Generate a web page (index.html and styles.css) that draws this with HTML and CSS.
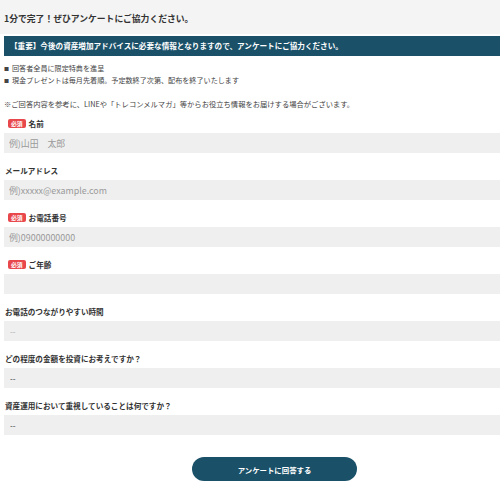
FILE: index.html
```html
<!DOCTYPE html>
<html lang="ja">
<head>
    <meta charset="UTF-8">
    <meta name="viewport" content="width=device-width, initial-scale=1.0">
    <title>アンケート</title>
    <link rel="stylesheet" href="styles.css">
</head>
<body>
    <header class="page-head">
        <h1>1分で完了！ぜひアンケートにご協力ください。</h1>
    </header>

    <div class="page">
        <p class="notice">【重要】今後の資産増加アドバイスに必要な情報となりますので、アンケートにご協力ください。</p>

        <ul class="perks">
            <li>回答者全員に限定特典を進呈</li>
            <li>現金プレゼントは毎月先着順。予定数終了次第、配布を終了いたします</li>
        </ul>

        <p class="note"><span class="mark">※&#xFE0E;</span>ご回答内容を参考に、LINEや「トレコンメルマガ」等からお役立ち情報をお届けする場合がございます。</p>

        <form class="survey" id="surveyForm">
            <div class="field">
                <label for="name"><span class="req">必須</span>名前</label>
                <input type="text" id="name" placeholder="例)山田　太郎">
            </div>

            <div class="field">
                <label for="email">メールアドレス</label>
                <input type="email" id="email" placeholder="例)xxxxx@example.com">
            </div>

            <div class="field">
                <label for="tel"><span class="req">必須</span>お電話番号</label>
                <input type="tel" id="tel" placeholder="例)09000000000">
            </div>

            <div class="field">
                <label for="age"><span class="req">必須</span>ご年齢</label>
                <input type="text" id="age">
            </div>

            <div class="field">
                <label for="callTime">お電話のつながりやすい時間</label>
                <select id="callTime" class="muted">
                    <option>--</option>
                </select>
            </div>

            <div class="field">
                <label for="budget">どの程度の金額を投資にお考えですか？</label>
                <select id="budget">
                    <option>--</option>
                </select>
            </div>

            <div class="field">
                <label for="priority">資産運用において重視していることは何ですか？</label>
                <select id="priority">
                    <option>--</option>
                </select>
            </div>

            <button type="submit" class="submit-btn">アンケートに回答する</button>
        </form>
    </div>
</body>
</html>
```

FILE: styles.css
```css
* {
    margin: 0;
    padding: 0;
    box-sizing: border-box;
}

body {
    font-family: 'Noto Sans CJK JP', 'Noto Sans', sans-serif;
    color: #333;
    background: #fff;
}

.page-head {
    background: #f4f4f4;
    height: 34px;
    display: flex;
    align-items: center;
    padding: 2px 0 0 4px;
}

.page-head h1 {
    font-size: 8.8px;
    font-weight: 700;
    color: #333;
}

.page {
    padding-left: 4px;
}

.notice {
    margin-top: 2px;
    height: 20px;
    line-height: 20px;
    background: #1a5169;
    color: #fff;
    font-size: 7.6px;
    font-weight: 700;
    padding-left: 6px;
    white-space: nowrap;
    overflow: hidden;
}

.perks {
    list-style: none;
    margin-top: 6px;
}

.perks li {
    font-size: 7.1px;
    line-height: 11px;
    color: #444;
    white-space: nowrap;
}

.perks li::before {
    content: "■";
    font-size: 5px;
    margin-right: 3px;
    vertical-align: 1px;
}

.note {
    margin-top: 12px;
    font-size: 7.3px;
    line-height: 12px;
    color: #444;
    white-space: nowrap;
}

.note .mark {
    font-family: 'Noto Sans CJK JP', sans-serif;
    font-variant-emoji: text;
    color: #444;
}

.survey {
    margin-top: 7px;
    display: flex;
    flex-direction: column;
}

.field {
    margin-bottom: 11px;
}

.field label {
    display: flex;
    align-items: center;
    height: 12px;
    margin-bottom: 4px;
    font-size: 7.6px;
    font-weight: 700;
    color: #333;
    padding-left: 1px;
}

.req {
    display: inline-block;
    background: #e8474b;
    color: #fff;
    font-size: 5.8px;
    font-weight: 700;
    line-height: 9px;
    height: 9px;
    padding: 0 3px;
    border-radius: 2px;
    margin: 0 3px;
}

.field input,
.field select {
    display: block;
    width: 100%;
    height: 20px;
    border: none;
    background: #efefef;
    padding: 0 5px;
    font-family: inherit;
    font-size: 8.9px;
    color: #333;
    outline: none;
    appearance: none;
    -webkit-appearance: none;
    border-radius: 0;
}

.field input::placeholder {
    color: #9a9a9a;
}

.field select {
    font-size: 8px;
    padding-left: 6px;
    color: #333;
}

.field select.muted {
    color: #aaa;
}

.submit-btn {
    align-self: flex-start;
    margin: 11px 0 0 188px;
    width: 165px;
    height: 24px;
    border: none;
    border-radius: 12px;
    background: #1a5169;
    color: #fff;
    font-family: inherit;
    font-size: 7.4px;
    font-weight: 700;
    cursor: pointer;
}
```
